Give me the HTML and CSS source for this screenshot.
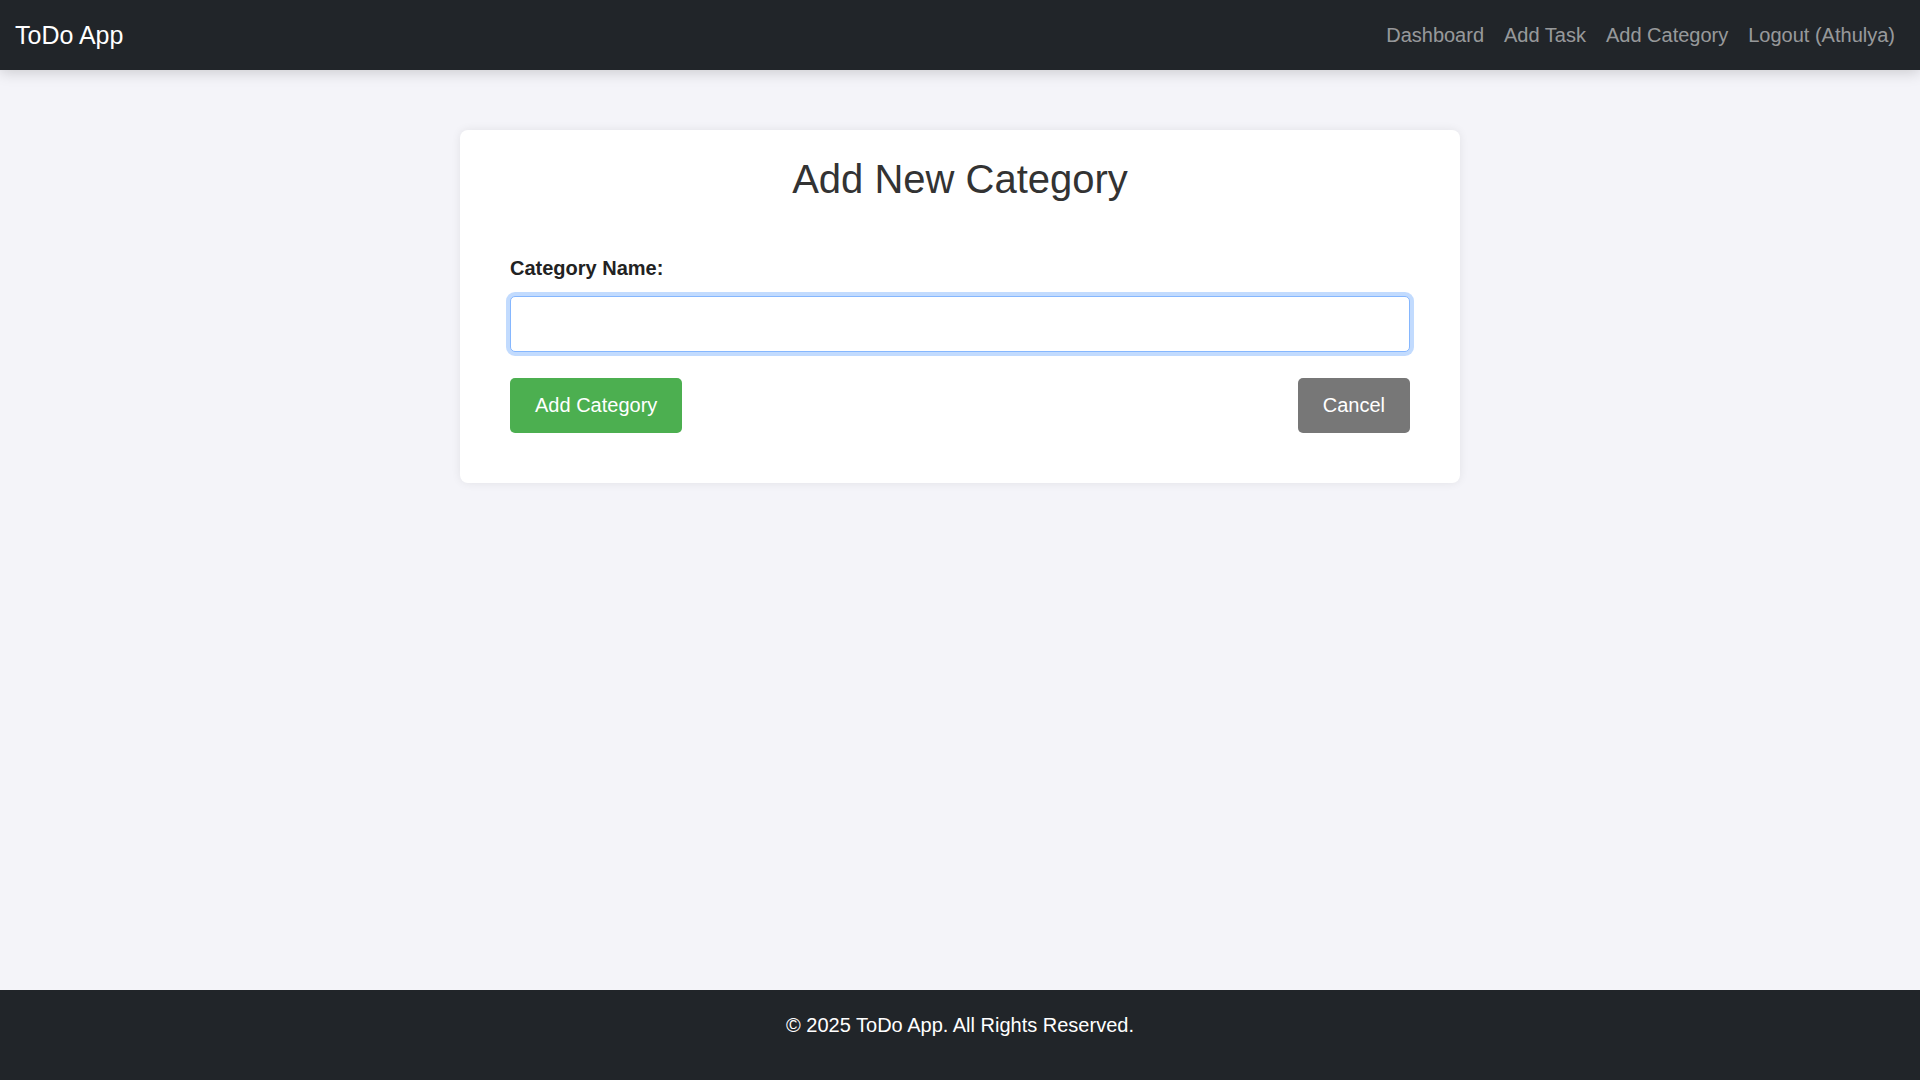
FILE: index.html
```html
<!DOCTYPE html>
<html lang="en">
<head>
<meta charset="utf-8">
<title>Add Category - ToDo App</title>
<link rel="stylesheet" href="styles.css">
</head>
<body>
<nav class="navbar">
  <a class="brand" href="#">ToDo App</a>
  <div class="nav-links">
    <a class="nav-link" href="#">Dashboard</a>
    <a class="nav-link" href="#">Add Task</a>
    <a class="nav-link" href="#">Add Category</a>
    <a class="nav-link" href="#">Logout (Athulya)</a>
  </div>
</nav>
<main class="main">
  <section class="card">
    <h2 class="card-title">Add New Category</h2>
    <form class="form">
      <label class="label" for="name">Category Name:</label>
      <input class="input input-focus" id="name" type="text">
      <div class="actions">
        <button class="btn btn-green" type="button">Add Category</button>
        <button class="btn btn-gray" type="button">Cancel</button>
      </div>
    </form>
  </section>
</main>
<footer class="footer">
  <p class="footer-text">© 2025 ToDo App. All Rights Reserved.</p>
</footer>
</body>
</html>
```

FILE: styles.css
```css
* { box-sizing: border-box; }

body {
  margin: 0;
  min-height: 100vh;
  display: flex;
  flex-direction: column;
  background: #f4f4f9;
  font-family: "Liberation Sans", Arial, sans-serif;
  color: #222;
}

.navbar {
  position: relative;
  z-index: 1;
  height: 70px;
  padding: 0 15px;
  display: flex;
  align-items: center;
  justify-content: space-between;
  background: #212529;
  box-shadow: 0 2px 14px rgba(0, 0, 0, 0.18);
}

.brand {
  color: #fff;
  font-size: 25px;
  text-decoration: none;
}

.nav-links {
  display: flex;
  align-items: center;
}

.nav-link {
  margin: 0 10px;
  font-size: 20px;
  color: rgba(255, 255, 255, 0.55);
  text-decoration: none;
}

.main {
  flex: 1;
  padding-top: 60px;
}

.card {
  width: 1000px;
  margin: 0 auto;
  padding: 26px 50px 50px;
  background: #fff;
  border-radius: 8px;
  box-shadow: 0 0 10px rgba(0, 0, 0, 0.08);
}

.card-title {
  margin: 0 0 55px;
  font-size: 40px;
  line-height: 46px;
  font-weight: normal;
  color: #333;
  text-align: center;
}

.form {
  display: flex;
  flex-direction: column;
}

.label {
  display: block;
  margin-bottom: 16px;
  font-size: 20px;
  font-weight: bold;
  line-height: 23px;
  color: #222;
}

.input {
  width: 100%;
  height: 56px;
  padding: 0 15px;
  font-family: inherit;
  font-size: 20px;
  background: #fff;
  border: 1px solid #ccc;
  border-radius: 5px;
  outline: none;
}

.input-focus {
  border-color: #86b7fe;
  box-shadow: 0 0 0 4px rgba(13, 110, 253, 0.25);
}

.actions {
  margin-top: 26px;
  display: flex;
  justify-content: space-between;
}

.btn {
  padding: 16px 25px;
  font-family: inherit;
  font-size: 20px;
  line-height: 23px;
  color: #fff;
  border: none;
  border-radius: 5px;
  cursor: pointer;
}

.btn-green { background: #4caf50; }
.btn-gray { background: #777; }

.footer {
  height: 90px;
  padding-top: 14px;
  background: #212529;
  text-align: center;
}

.footer-text {
  margin: 10px 0 0;
  font-size: 20px;
  line-height: 23px;
  color: #fff;
}
```
